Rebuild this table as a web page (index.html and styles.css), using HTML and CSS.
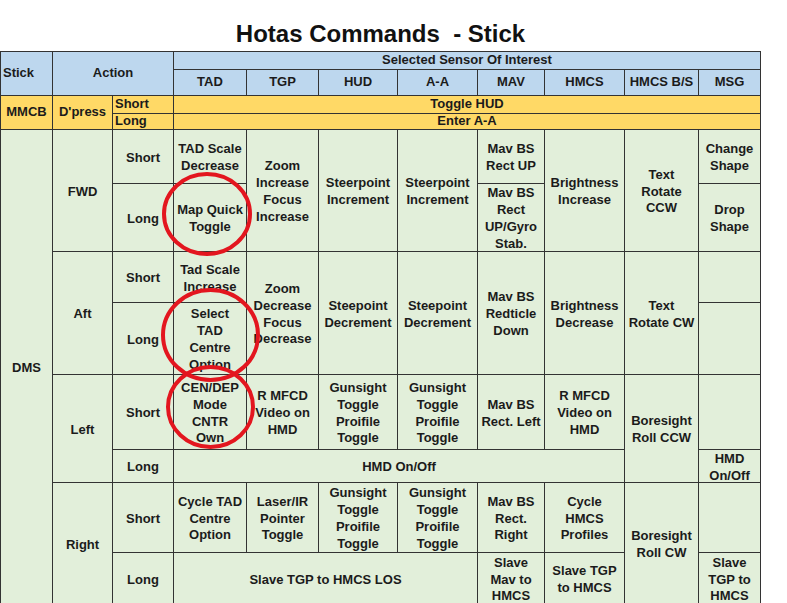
FILE: index.html
```html
<!DOCTYPE html>
<html lang="en">
<head>
<meta charset="utf-8">
<title>Hotas Commands - Stick</title>
<link rel="stylesheet" href="styles.css">
</head>
<body>
<div class="sheet">
  <h1 class="title">Hotas Commands&nbsp; - Stick</h1>
  <div class="grid">
    <!-- row 1 -->
    <div class="cell hd rs2 left">Stick</div>
    <div class="cell hd rs2 cs2">Action</div>
    <div class="cell hd cs8">Selected Sensor Of Interest</div>
    <!-- row 2 -->
    <div class="cell hd">TAD</div>
    <div class="cell hd">TGP</div>
    <div class="cell hd">HUD</div>
    <div class="cell hd">A-A</div>
    <div class="cell hd">MAV</div>
    <div class="cell hd">HMCS</div>
    <div class="cell hd">HMCS B/S</div>
    <div class="cell hd">MSG</div>
    <!-- row 3 -->
    <div class="cell yl rs2">MMCB</div>
    <div class="cell yl rs2">D'press</div>
    <div class="cell yl left">Short</div>
    <div class="cell yl cs8">Toggle HUD</div>
    <!-- row 4 -->
    <div class="cell yl left">Long</div>
    <div class="cell yl cs8">Enter A-A</div>
    <!-- row 5 : FWD short -->
    <div class="cell rs8">DMS</div>
    <div class="cell rs2">FWD</div>
    <div class="cell">Short</div>
    <div class="cell">TAD Scale<br>Decrease</div>
    <div class="cell rs2">Zoom<br>Increase<br>Focus<br>Increase</div>
    <div class="cell rs2">Steerpoint<br>Increment</div>
    <div class="cell rs2">Steerpoint<br>Increment</div>
    <div class="cell">Mav BS<br>Rect UP</div>
    <div class="cell rs2">Brightness<br>Increase</div>
    <div class="cell rs2">Text<br>Rotate<br>CCW</div>
    <div class="cell">Change<br>Shape</div>
    <!-- row 6 : FWD long -->
    <div class="cell">Long</div>
    <div class="cell">Map Quick<br>Toggle</div>
    <div class="cell">Mav BS<br>Rect<br>UP/Gyro<br>Stab.</div>
    <div class="cell">Drop<br>Shape</div>
    <!-- row 7 : Aft short -->
    <div class="cell rs2">Aft</div>
    <div class="cell">Short</div>
    <div class="cell">Tad Scale<br>Increase</div>
    <div class="cell rs2">Zoom<br>Decrease<br>Focus<br>Decrease</div>
    <div class="cell rs2">Steepoint<br>Decrement</div>
    <div class="cell rs2">Steepoint<br>Decrement</div>
    <div class="cell rs2">Mav BS<br>Redticle<br>Down</div>
    <div class="cell rs2">Brightness<br>Decrease</div>
    <div class="cell rs2">Text<br>Rotate CW</div>
    <div class="cell"></div>
    <!-- row 8 : Aft long -->
    <div class="cell">Long</div>
    <div class="cell">Select<br>TAD<br>Centre<br>Option</div>
    <div class="cell"></div>
    <!-- row 9 : Left short -->
    <div class="cell rs2">Left</div>
    <div class="cell">Short</div>
    <div class="cell">CEN/DEP<br>Mode<br>CNTR<br>Own</div>
    <div class="cell">R MFCD<br>Video on<br>HMD</div>
    <div class="cell">Gunsight<br>Toggle<br>Proifile<br>Toggle</div>
    <div class="cell">Gunsight<br>Toggle<br>Proifile<br>Toggle</div>
    <div class="cell">Mav BS<br>Rect. Left</div>
    <div class="cell">R MFCD<br>Video on<br>HMD</div>
    <div class="cell rs2">Boresight<br>Roll CCW</div>
    <div class="cell"></div>
    <!-- row 10 : Left long -->
    <div class="cell">Long</div>
    <div class="cell cs6">HMD On/Off</div>
    <div class="cell">HMD<br>On/Off</div>
    <!-- row 11 : Right short -->
    <div class="cell rs2">Right</div>
    <div class="cell">Short</div>
    <div class="cell">Cycle TAD<br>Centre<br>Option</div>
    <div class="cell">Laser/IR<br>Pointer<br>Toggle</div>
    <div class="cell">Gunsight<br>Toggle<br>Proifile<br>Toggle</div>
    <div class="cell">Gunsight<br>Toggle<br>Proifile<br>Toggle</div>
    <div class="cell">Mav BS<br>Rect.<br>Right</div>
    <div class="cell">Cycle<br>HMCS<br>Profiles</div>
    <div class="cell rs2">Boresight<br>Roll CW</div>
    <div class="cell"></div>
    <!-- row 12 : Right long -->
    <div class="cell">Long</div>
    <div class="cell cs4">Slave TGP to HMCS LOS</div>
    <div class="cell">Slave<br>Mav to<br>HMCS</div>
    <div class="cell">Slave TGP<br>to HMCS</div>
    <div class="cell">Slave<br>TGP to<br>HMCS</div>
  </div>
</div>
<svg class="marks" width="787" height="603" viewBox="0 0 787 603" aria-hidden="true">
  <ellipse cx="207" cy="214" rx="43" ry="40"/>
  <ellipse cx="210.5" cy="335" rx="47.5" ry="45"/>
  <ellipse cx="210.5" cy="407" rx="42.5" ry="40"/>
</svg>
</body>
</html>
```

FILE: styles.css
```css
html, body {
  margin: 0;
  padding: 0;
  overflow: hidden;
  background: #ffffff;
}

body {
  position: relative;
  font-family: "Liberation Sans", Arial, sans-serif;
  color: #1b1b1b;
}

.sheet {
  width: 761px;
}

.title {
  margin: 0;
  height: 51px;
  box-sizing: border-box;
  padding-top: 20px;
  font-size: 24px;
  line-height: 28px;
  font-weight: bold;
  text-align: center;
  color: #111111;
  white-space: pre;
}

.grid {
  display: grid;
  grid-template-columns: 51px 59px 60px 72px 71px 78px 79px 66px 79px 73px 61px;
  grid-template-rows: 17px 25px 17px 15px 53px 67px 50px 71px 74px 32px 69px 51px;
  gap: 1px;
  width: max-content;
  background: #333333;
  border: 1px solid #333333;
  font-size: 13px;
  font-weight: bold;
  line-height: 16.8px;
}

.cell {
  display: flex;
  align-items: center;
  justify-content: center;
  text-align: center;
  background: #e2efda;
  white-space: nowrap;
  min-width: 0;
  min-height: 0;
  padding-top: 3px;
}

.hd {
  background: #bdd7ee;
  padding-top: 0;
}

.yl {
  background: #ffd966;
  padding-top: 0;
}

.left {
  justify-content: flex-start;
  padding-left: 2px;
}

.cs2 { grid-column-end: span 2; }
.cs4 { grid-column-end: span 4; }
.cs6 { grid-column-end: span 6; }
.cs8 { grid-column-end: span 8; }
.rs2 { grid-row-end: span 2; }
.rs8 { grid-row-end: span 8; }

.marks {
  position: absolute;
  left: 0;
  top: 0;
  pointer-events: none;
}

.marks ellipse {
  fill: none;
  stroke: #e3161f;
  stroke-width: 4;
}
```
